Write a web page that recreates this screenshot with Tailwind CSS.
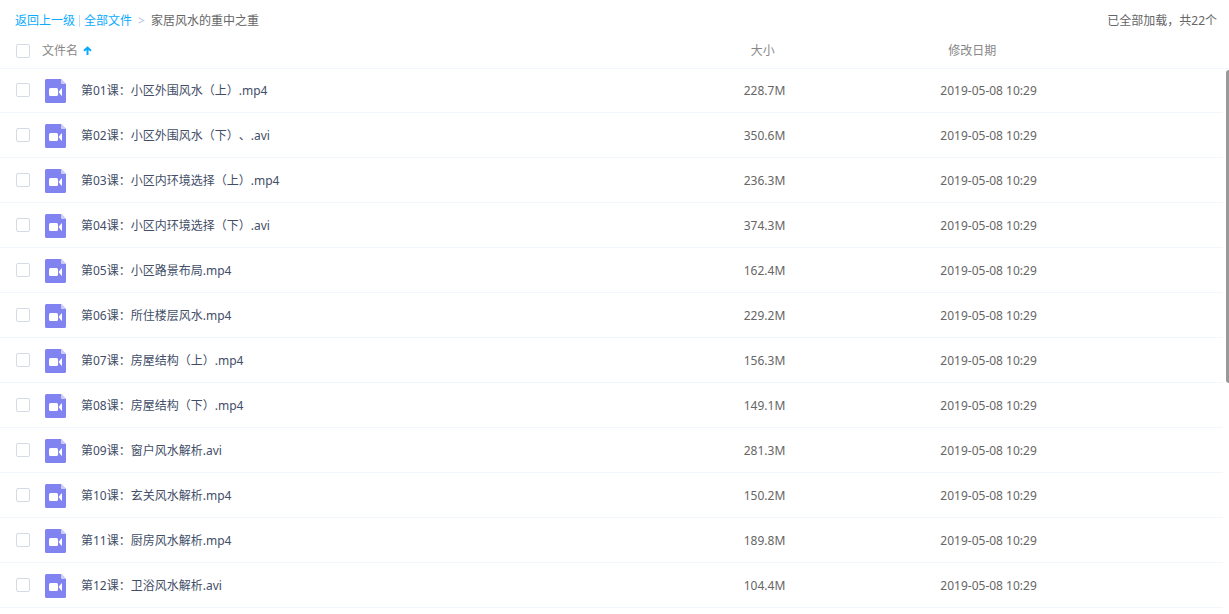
<!DOCTYPE html>
<html lang="zh-CN">
<head>
    <meta charset="UTF-8">
    <meta name="viewport" content="width=device-width, initial-scale=1.0">
    <title>家居风水的重中之重</title>
    <script src="https://cdn.jsdelivr.net/npm/@tailwindcss/browser@4"></script>
    <style>
        body {
            font-family: 'Noto Sans', 'Noto Sans CJK SC', sans-serif;
            text-spacing-trim: space-all;
        }
    </style>
</head>
<body class="bg-white text-xs text-[#666] overflow-hidden">
    <header class="h-[33px] pt-2 pl-[15px] pr-3 flex items-center justify-between">
        <nav class="flex items-center">
            <a href="#" class="text-[#09aaff]">返回上一级</a>
            <span class="w-px h-3 mx-1 bg-[#c4dbfe]"></span>
            <a href="#" class="text-[#09aaff]">全部文件</a>
            <span class="mx-1.5 text-[#b4c4dc]">&gt;</span>
            <span>家居风水的重中之重</span>
        </nav>
        <span>已全部加载，共22个</span>
    </header>

    <main class="relative">
        <table class="w-full table-fixed border-separate border-spacing-0 text-left">
            <thead>
                <tr class="h-9 text-[#888]">
                    <th class="p-0 pl-4 font-normal border-b border-[#f2f6fd]">
                        <div class="flex items-center">
                            <input type="checkbox" id="check-all" aria-label="全选" class="appearance-none size-3.5 rounded-xs border border-[#d5dbe5] bg-white checked:bg-[#09aaff]">
                            <button type="button" class="ml-3 flex items-center gap-[5px]">
                                文件名
                                <svg class="w-[9px] h-2.5" viewBox="0 0 9 10" fill="none" stroke="#09aaff" stroke-width="2">
                                    <path d="M4.500 9V2M1 4.800 4.500 1.500 8 4.800"/>
                                </svg>
                            </button>
                        </div>
                    </th>
                    <th class="w-[16%] p-0 pl-[7px] font-normal border-b border-[#f2f6fd]">大小</th>
                    <th class="w-[23%] p-0 pl-2 font-normal border-b border-[#f2f6fd]">修改日期</th>
                    <th class="w-1.5 p-0 border-b border-[#f2f6fd]"></th>
                </tr>
            </thead>
            <tbody id="file-list"></tbody>
        </table>
        <!-- scrollbar thumb -->
        <div class="absolute right-0 top-[37px] w-[3px] h-[313px] rounded-l-sm bg-[#999]"></div>
    </main>

    <script>
        const files = [
            { name: '第01课：小区外围风水（上）.mp4', size: '228.7M' },
            { name: '第02课：小区外围风水（下）、.avi', size: '350.6M' },
            { name: '第03课：小区内环境选择（上）.mp4', size: '236.3M' },
            { name: '第04课：小区内环境选择（下）.avi', size: '374.3M' },
            { name: '第05课：小区路景布局.mp4', size: '162.4M' },
            { name: '第06课：所住楼层风水.mp4', size: '229.2M' },
            { name: '第07课：房屋结构（上）.mp4', size: '156.3M' },
            { name: '第08课：房屋结构（下）.mp4', size: '149.1M' },
            { name: '第09课：窗户风水解析.avi', size: '281.3M' },
            { name: '第10课：玄关风水解析.mp4', size: '150.2M' },
            { name: '第11课：厨房风水解析.mp4', size: '189.8M' },
            { name: '第12课：卫浴风水解析.avi', size: '104.4M' }
        ];

        const fileList = document.getElementById('file-list');
        files.forEach((file, i) => {
            const row = document.createElement('tr');
            row.className = 'h-[45px] first:h-11';
            row.innerHTML = `
                <td class="p-0 pt-px pl-4 border-b border-[#f2f6fd]">
                    <div class="flex items-center">
                        <input type="checkbox" id="file-${i}" class="file-check mb-0.5 appearance-none size-3.5 rounded-xs border border-[#d5dbe5] bg-white checked:bg-[#09aaff]">
                        <svg class="w-[21px] h-6 ml-[15px]" viewBox="0 0 21 24">
                            <path fill="#8183f1" d="M1.500 0H16l5 5v17.500a1.500 1.500 0 0 1-1.500 1.500h-18A1.500 1.500 0 0 1 0 22.500v-21A1.500 1.500 0 0 1 1.500 0z"/>
                            <path fill="#cdcdfa" d="M16 0l5 5h-4a1 1 0 0 1-1-1z"/>
                            <rect x="4" y="9" width="9" height="8" rx="1.500" fill="#fff"/>
                            <path fill="#fff" d="M13.600 13 16.300 9.500q.7-.7.7.3v6.400q0 1-.7.3z"/>
                        </svg>
                        <label for="file-${i}" class="ml-[15px] text-[#424e67]">${file.name}</label>
                    </div>
                </td>
                <td class="p-0 pt-px border-b border-[#f2f6fd]">${file.size}</td>
                <td class="p-0 pt-px border-b border-[#f2f6fd]">2019-05-08 10:29</td>
                <td class="p-0"></td>
            `;
            fileList.appendChild(row);
        });

        document.getElementById('check-all').addEventListener('change', function() {
            document.querySelectorAll('.file-check').forEach(box => box.checked = this.checked);
        });
    </script>
</body>
</html>
